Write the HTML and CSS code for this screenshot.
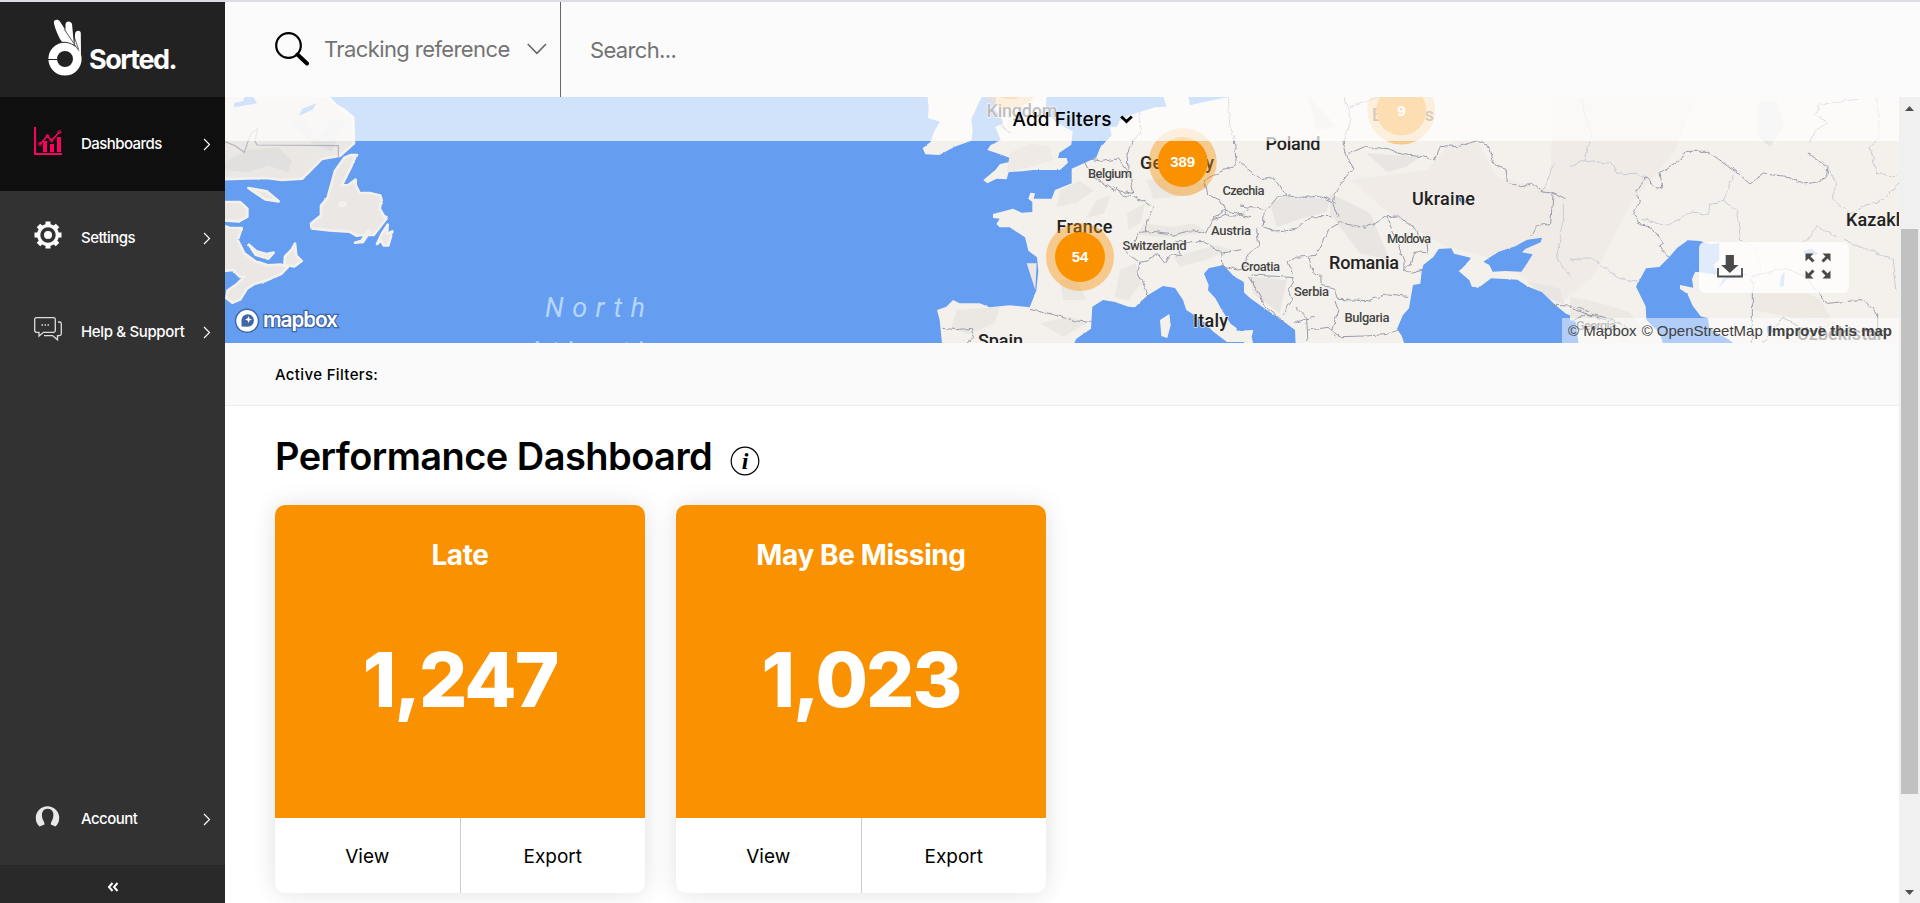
FILE: index.html
```html
<!DOCTYPE html>
<html lang="en">
<head>
<meta charset="utf-8">
<title>Sorted – Performance Dashboard</title>
<link rel="stylesheet" href="styles.css">
</head>
<body>
<div class="app">
  <aside class="sidebar">
    <div class="logo">
      <svg class="logo-mark" width="36" height="60" viewBox="47 18 36 60">
        <circle cx="65" cy="59" r="12.300" fill="none" stroke="#fff" stroke-width="8.600"/>
        <path d="M48 59.500h9" stroke="#222" stroke-width="1"/>
        <path d="M54 23c-1-3 4-4.500 6-1.500l14 22-2 1c-3-2-6-2.500-10-2.500C59 38 55 29 54 23z" fill="#fff"/>
        <path d="M65.500 24.500c0-4 5.500-4 6.500-.5l2 21-1-1-7.500-14z" fill="#fff"/>
        <path d="M75 34c.5-4.500 5.500-4 5.800-1L81 56c-1-4-3-8-6.500-11z" fill="#fff"/>
        <path d="M61 42.300c6-.5 10 .8 14 4" fill="none" stroke="#222" stroke-width=".8"/>
        <path d="M64 29l15 22M73.500 35l5 14" stroke="#222" stroke-width=".7"/>
      </svg>
      <span class="logo-text">Sorted.</span>
    </div>
    <nav class="nav">
      <a class="nav-item active">
        <svg class="nav-icon" width="28" height="28" viewBox="0 0 28 28" fill="none" stroke="#f9035e">
          <path d="M1 0v27h27" stroke-width="2.200"/>
          <path d="M6 17l7.500-8 4 4.500L25.500 5" stroke-width="1.600"/>
          <circle cx="6" cy="17" r="1.500"/><circle cx="13.500" cy="9" r="1.500"/><circle cx="17.500" cy="13.500" r="1.500"/><circle cx="25.500" cy="5" r="1.500"/>
          <path d="M11 25V14M18 25v-8M25 25V10" stroke-width="4"/>
        </svg>
        <span class="nav-label">Dashboards</span>
        <svg class="chev" width="8" height="13" viewBox="0 0 8 13"><path d="M1 1l5.500 5.500L1 12"/></svg>
      </a>
      <a class="nav-item">
        <svg class="nav-icon" width="28" height="28" viewBox="-14 -14 28 28" fill="none" stroke="#fff">
          <circle r="9.300" stroke-width="3.200"/>
          <circle r="4" fill="#fff" stroke="none"/>
          <g stroke-width="5"><path d="M0-13.500V-9M0 9v4.500M-13.500 0H-9M9 0h4.500"/><path transform="rotate(45)" d="M0-13.500V-9M0 9v4.500M-13.500 0H-9M9 0h4.500"/></g>
        </svg>
        <span class="nav-label">Settings</span>
        <svg class="chev" width="8" height="13" viewBox="0 0 8 13"><path d="M1 1l5.500 5.500L1 12"/></svg>
      </a>
      <a class="nav-item">
        <svg class="nav-icon" width="28" height="28" viewBox="0 0 28 28" fill="none" stroke="#ddd" stroke-width="1.300">
          <path d="M2.500 2.700h17q1.800 0 1.800 1.800v11q0 1.800-1.800 1.800H9.500L5 21v-3.700H2.500q-1.800 0-1.800-1.800v-11q0-1.800 1.800-1.800z"/>
          <path d="M24 7h1.500q1.800 0 1.800 1.800v10q0 1.800-1.800 1.800h-2v4.200l-5-4.200H10"/>
          <path d="M7.500 10h1.500M10.500 10H12M13.500 10H15" stroke-width="1.500"/>
        </svg>
        <span class="nav-label help">Help &amp; Support</span>
        <svg class="chev" width="8" height="13" viewBox="0 0 8 13"><path d="M1 1l5.500 5.500L1 12"/></svg>
      </a>
      <a class="nav-item account">
        <svg class="nav-icon" width="28" height="28" viewBox="0 0 28 28">
          <path d="M5.500 24.500A11.700 11.700 0 1 1 21.500 24.500L16.800 22.500c0-2 .5-2.500 1.500-4.500 1.200-3 1.500-6 .5-8-1.600-4.300-8.700-4.300-10.300 0-1 2-.7 5 .5 8 1 2 1.500 2.500 1.500 4.500z" fill="#e8e8e8"/>
        </svg>
        <span class="nav-label">Account</span>
        <svg class="chev" width="8" height="13" viewBox="0 0 8 13"><path d="M1 1l5.500 5.500L1 12"/></svg>
      </a>
      <button class="collapse">
        <svg width="12" height="10" viewBox="0 0 12 10" fill="none" stroke="#fff" stroke-width="2"><path d="M5.500 1L2 5l3.500 4M10.500 1L7 5l3.500 4"/></svg>
      </button>
    </nav>
  </aside>

  <div class="main">
    <header class="topbar">
      <div class="search-type">
        <svg width="34" height="34" viewBox="0 0 34 34" fill="none" stroke="#000"><circle cx="13.500" cy="13.500" r="12.300" stroke-width="2.200"/><path d="M22.500 22.500l9.500 9" stroke-width="4" stroke-linecap="round"/></svg>
        <span class="search-type-label">Tracking reference</span>
        <svg width="20" height="12" viewBox="0 0 20 12" fill="none" stroke="#666" stroke-width="1.600"><path d="M.7 1l9.200 9.300L19 1"/></svg>
      </div>
      <span class="search-placeholder">Search...</span>
    </header>

    <div class="body">
      <div class="content">
        <section class="map">
          <svg class="map-canvas" width="1674" height="246" viewBox="225 97 1674 246">
            <defs>
              <filter id="rough" x="-5%" y="-5%" width="110%" height="110%">
                <feTurbulence type="fractalNoise" baseFrequency="0.14" numOctaves="2" seed="4"/>
                <feDisplacementMap in="SourceGraphic" scale="5" xChannelSelector="R" yChannelSelector="G"/>
              </filter>
            </defs>
            <rect x="225" y="97" width="1674" height="246" fill="#659df0"/>
            <!-- Eastern Canada -->
            <g filter="url(#rough)" transform="translate(225 90) scale(.33333)" fill="#ebe7e4" stroke="#f4f1ec" stroke-width="8" stroke-linejoin="round">
              <path d="M-20 10H300L332 45 360 62 384 82 387 160 345 197 290 207 232 266 170 270 125 264-20 268z"/>
              <path d="M70 294l55 10 36 30-40-6z"/>
              <path d="M-20 336H45l22 20v24l-25 14-62-4z"/>
              <path d="M-20 402L15 414l35 0-12 36 20 40 30 22 40 14 40-2 20 8-20 20-50 22-30 8-22 14-20 32-24 10-18-14 4-22 28-20 22-22-14 0-20-20-44 4z"/>
              <path d="M72 464l22 20 30 8 22-4-16 18-38-12z"/>
              <path d="M178 525l2-26 20-20 10-18 4 36 16 16-22 16z"/>
              <path d="M260 415l-2-14 30-24 0-30 20-24 22-80 28-40 20-8 18 0-8 12-10 24-28 56 20-2 22-16 0 16 12 24 30 0 32 8 4 14-6 24 12 22 10 6-20 26-20 26-32 0-20 2-20-12-60-4z"/>
              <path d="M390 458l20-6 18-30 8 0-22 34zM456 462l14-30 18-28-2 28 16-8-12 42-14 0-8-14z"/>
            </g>
            <g transform="translate(225 90) scale(.33333)">
              <path d="M0 215l70-35 90-8 40 40-10 35-60-20-60 20-70-6zM190 95l50-5 30 60 50-60 40 0-40 95-60-25z" fill="#e2e0df"/>
              <path d="M27 38l28-4 5-18 22 0 14 24-34 6-34 6zM222 78l10-22 42-16-10 18z" fill="#659df0"/>
              <path d="M0 155l30 12 28 20 10-30 12-28 18-14-8 38 6 12 244 2v36" fill="none" stroke="#b4b2c0" stroke-width="3.500"/>
              <ellipse cx="352" cy="343" rx="13" ry="9" fill="#f4f1ec"/>
            </g>
            <!-- Western Europe -->
            <g filter="url(#rough)" transform="translate(900 90) scale(.33333)">
              <path d="M80 0L86 50l-2 34 36 11-18 30-10 30-24 20 8 18 42 2 46-25 50-18 4-28-4-36 22-48 10-20 0-20z" fill="#f4f1ec"/>
              <path d="M290 0l-4 60 16 20 8 20-24 10 16 40-30 15-10 15 36 12 32 12 16-4-6 14-40 8-14 18-36 30 12 10 28-14 30 2 6-22 42-2 30-4 82 0 24-22-4-14-26 0 4-16 36-24 4-40-46-24-36-40 6-60z" fill="#f4f1ec"/>
              <path d="M330 190l60-30 60 10 10 40-80 24-60 14z" fill="#efeae6"/>
              <path d="M785 0l14 50-34 2-46 14-32 10-28 16-8 18-22 2 6 24-34 36-12 30-16 8-58 26 0 44-50 20-10 26-54 0 4-16-14-2-6 18 12 10 0 30-32 2-26-12-60 16 0 12 20 2-10 16 10 10 30 0 46 30 10 40 26 20 4 40-6 60-20 50-60-6-60 6-30-12-60 0-20-10-20 20-28 10 8 30 10 100 380 0 20-44 44-30 4-66 32-20 36 6 40 14 20 2 38-36 46-28 36 6 24 36 10 30 46 30 36 36 40 30 160 0V0z" fill="#f4f1ec"/>
              <path d="M780 690l28-18 4 34-10 38-18-6z" fill="#f4f1ec"/>
              <path d="M970 525l-44 10-14 16 14 34-2 16 22 24 20 36 26 40 30 22 60 0V640l-54-66-25-14z" fill="#659df0"/>
              <path d="M862 0l8 46 42-10 58-12 60-8V0z" fill="#659df0"/>
            </g>
            <g transform="translate(900 90) scale(.33333)" fill="#ebe8e4">
              <path d="M480 300l60-28 40 30-50 36-60 14zM590 330l42-14-20 55-55 14zM680 370l55-30-14 60-36 20zM480 570l50 0 30 60-70 0zM660 540l48-20 16 60-40 52-40-10zM170 660l130-10-16 50-80 34-50-20zM420 700l90-20 50 20-70 40zM380 520l30 0-4 80zM740 270l110-14 80 34-60 26-110 10zM730 400l90 10 60-10 44 28-120 14-90-6zM820 500l130-34 40 14-70 30-80 20z"/>
            </g>
            <!-- Eastern Europe and the Black Sea -->
            <g filter="url(#rough)" transform="translate(1240 90) scale(.33333)">
              <path d="M12 0H2080V800H12z" fill="#f4f1ec"/>
              <path d="M330 270L560 240 640 150 710 150 770 260 930 300 940 0H1380L1300 190 1180 330 1060 560 960 640 830 550 740 500 620 470 460 380z" fill="#f0ebe7"/>
              <path d="M270 310l120 60 60 140-90-20-90-120zM90 340l50-24 130 10-10 40-80 20-70 26zM380 190l160 10-40 30-60 16zM30 560l110 10-20 100-80-60zM200 10l90 100-60 10zM860 575l100 20 14 50-50-20z" fill="#e8e5e2"/>
              <path d="M-10 590l10 6 30 28 30 22 65 44 40 30 4 90H50l-15-70 5-20-50 2z" fill="#659df0"/>
              <path d="M545 545l5-20 30-24 16-24 38-2 8 16 50 12-6 20-30 20 32 28 8 20 26-2 32-24 78 4 30 20 44 18 40 38 32 26 30 12 10 110H780l-15-34-50 0-50 12-50 26H505l-20-60-14-20 18-42 18-20 12-70 22-4z" fill="#659df0"/>
              <path d="M730 515l46-30 50-16 36-20 44-6-4 14-46 20-10 10 32 6-16 26-18 26-50-2-36 2-10-20z" fill="#659df0"/>
              <path d="M660 542l36-40 30 8 16 20 14 24-24 16-18 24-16-6-6-24z" fill="#f4f1ec"/>
              <path d="M644 320l26 4 14 16-20-2z" fill="#3b7fe8"/>
            </g>
            <!-- Caspian Sea -->
            <g filter="url(#rough)" transform="translate(1570 90) scale(.33333)">
              <path d="M198 590l30-55 40-4 30-30 24-28 32-22 36 2 30 10 28-4 0 50-18 16 16 30-40-6-30-4-10 22 4 26-40-8 0 12 22 14 16 36 24 32 22 6 4 32 56 30 44 32-40 0H285l-16-50-40-40-2-40z" fill="#659df0"/>
              <path d="M445 596l14-28 30-14 50-2-70 16zM632 560l12-16-2 42-12 6zM696 484l30-8 20 16-30 6zM590 710l14-6 4 20-14 16z" fill="#659df0"/>
              <path d="M550 610l150-10 50 30 60 100-110-40-150-30z" fill="#efe9e3"/>
              <path d="M0 20l190 20 60 100-140 30L0 150z" fill="#f0ebe7"/>
              <path d="M0 620l80 16 100 30 40 60-60 20L0 690z" fill="#ebe9e2"/>
              <path d="M560 40l60-10 20 80-40 60-36-30z" fill="#e4e5e4"/>
            </g>
            <!-- Country borders -->
            <g filter="url(#rough)" fill="none" stroke="#9493a6" stroke-width="2.800">
              <g transform="translate(900 90) scale(.33333)">
                <path d="M575 208l30 6 50-8 30 40 10 34 6 30-60-10-40-26-36-30-12-30M685 250l-4-60 20-40 20-20 0-60M640 290l30 26 30 4 64 30-20 40-6 36M740 425l-24 2-20 40-20 16 14 14 30 20 20-4 32-22 22 28 20-28 28 6-10-30 30-6M740 425l80 10 60-16 40 10 20-40 40-14M720 510l-6 40 20 40 14 34-24 10M390 655l60 16 40 12 40 10 44 4M128 715l40 4 46-4 10 30-20 14M985 20l4 80 14 50 6 76-50 20-46 26 10 40 40 20 20 46 20 0 50-20M935 390l40-30 75 20M830 455l80 0 60 34 54-10M965 485l4 40 36 14 46-10M290 100l50 30"/>
              </g>
              <g transform="translate(1240 90) scale(.33333)">
                <path d="M315 20l18 80-24 56 12 40 18 42-50 60-10 44 16 42M0 215l20 20 46 34 34-6 38 52-24 4-42 52-2 40 40 12 60-8 40-34 62-2M140 318l60 4 44-4 46 22M328 190l46-20 70 6 44 18 60 6 36 10 14-44 54 4 60-18 36 16 14 56 36 12 4 40 40 14 36-10 28 26 40 4 30 16M0 348l70 10M50 415l6 50-30 30-10 20M298 398l-30 20-40 78-60 6-24 16 12 30 4 30-16 20 14 30-28 44M298 398l76 14 32-12 32-20 40-2 28 24 26 20 4 30M438 380l30 70 24 60 0 30 20 10 38-10M560 450l4 38-40-2-12 40-20 10M205 502l14 40 24 20 0 24 40 8 12 34 90 4 60-20 66 8M285 630l10 30-20 60 30 20 70-2 60-4 44-14M25 560l60 100 50 40M30 555l80 4 50 4M165 650l36 36 26-6M160 700l40-14 4 70M205 720l60-8 24 30M940 306l-8 94-40 8-20 30M330 50l44-14 60-20M935 645l60 4 55 16"/>
              </g>
              <g transform="translate(1570 90) scale(.33333)">
                <path d="M0 655l60 20 40 12 50 10M0 700l50-30 76 16 60 40M298 498l-30-26 12-10-30-46-36-8-24-34 18-40-8-34 28-40 30 38 20-8-8-42 62-40 14-24 66 0 46 32 38 26 44 40 40-30 60 6 66 24 34-6 30-16 4-30-60-40M720 155l20-40 36-16-40-26 10-30 76-10 44-6M547 760V562l92-28 62 20 70 86 60-6 52-2 40 40 0 80M580 758l60-74 40 20 60 50"/>
              </g>
            </g>
            <g filter="url(#rough)" fill="none" stroke="#c8c8d3" stroke-width="2.800">
              <path transform="translate(1570 90) scale(.33333)" d="M-50 220l-20 60-20 28M30 20l20 70 14 40-22 80-42 20M42 210l80 10 20 32 56-2 22 14M214 388l86 18 64-40 52 8 4-34 40-8 30-80M460 330l40 30 12 90 50 30 10 80M760 210l40 70-14 44 50 46 40-20 60-20 60-60M920 20l10 120-30 30 20 80 60 10M820 450l80 30 70 30 10 90M0 510l60-8 60 44 30 20 60 8M700 460l40-50 60 30M0 560l-40-60 20-100 0-60"/>
            </g>
            <!-- Place names -->
            <g class="place big">
              <text x="986.500" y="117" textLength="71">Kingdom</text>
              <text x="1140" y="169" textLength="74">Germany</text>
              <text x="1265.500" y="149.500" textLength="55">Poland</text>
              <text x="1056.500" y="233" textLength="56">France</text>
              <text x="1412" y="204.500" textLength="63">Ukraine</text>
              <text x="1329" y="269" textLength="70">Romania</text>
              <text x="1193" y="327" textLength="35">Italy</text>
              <text x="978" y="347" textLength="45">Spain</text>
              <text x="1372" y="121" textLength="62">Belarus</text>
              <text x="1846" y="226" textLength="95">Kazakhstan</text>
              <text x="1797" y="340" textLength="90" class="muted">Uzbekistan</text>
            </g>
            <g class="place small">
              <text x="1088" y="177.500" textLength="44">Belgium</text>
              <text x="1222.500" y="194.500" textLength="42">Czechia</text>
              <text x="1211" y="235" textLength="40">Austria</text>
              <text x="1122.500" y="250" textLength="64">Switzerland</text>
              <text x="1241" y="270.500" textLength="39">Croatia</text>
              <text x="1387" y="243" textLength="44">Moldova</text>
              <text x="1294" y="296" textLength="35">Serbia</text>
              <text x="1344.500" y="321.500" textLength="45">Bulgaria</text>
              <text x="1576" y="330" textLength="40" class="muted">Georgia</text>
            </g>
            <g class="ocean">
              <text x="545" y="317" textLength="100">North</text>
              <text x="527" y="361" textLength="136">Atlantic</text>
            </g>
            <!-- Clusters -->
            <g class="cluster">
              <g fill="#f99100" fill-opacity=".4"><circle cx="1010" cy="74" r="34"/><circle cx="1182.700" cy="162" r="34"/><circle cx="1080" cy="257" r="34"/><circle cx="1401.300" cy="110.500" r="34"/></g>
              <g fill="#f99100"><circle cx="1010" cy="74" r="25"/><circle cx="1182.700" cy="162" r="25"/><circle cx="1080" cy="257" r="25"/><circle cx="1401.300" cy="110.500" r="25"/></g>
              <text x="1182.700" y="167">389</text>
              <text x="1080" y="262">54</text>
            </g>
            <rect x="225" y="97" width="1674" height="44" fill="#fff" fill-opacity=".7"/>
            <g class="cluster"><text x="1401.300" y="115.500">9</text></g>
            <!-- Provider logo -->
            <circle cx="247" cy="320.800" r="11.500" fill="#fff" stroke="#3f66a6" stroke-width="1.500"/>
            <path d="M241.500 326.500v-6a6.200 6.200 0 1 1 6.200 6.200z" fill="#3f66a6"/>
            <path d="M248.500 316l1 2.500 2.500 1-2.500 1-1 2.500-1-2.500-2.500-1 2.500-1z" fill="#fff"/>
            <text class="provider" x="263" y="326.500" textLength="75">mapbox</text>
          </svg>
          <button class="add-filters">
            <span class="add-filters-label">Add Filters</span>
            <svg width="13" height="9" viewBox="0 0 13 9" fill="none" stroke="#000" stroke-width="3"><path d="M1.200 1.500l5.300 5 5.300-5"/></svg>
          </button>
          <div class="map-tools">
            <svg width="26" height="23" viewBox="0 0 26 23" fill="#4a4a4a"><path d="M8.700 0h8.200v10h4.600L12.800 18 4.100 10h4.600z"/><path d="M1 13v8.500h24V13" fill="none" stroke="#4a4a4a" stroke-width="1.800"/></svg>
            <svg width="26" height="26" viewBox="0 0 26 26" fill="#4a4a4a" stroke="#4a4a4a"><g id="arrow"><path d="M.5.500h8l-8 8z" stroke="none"/><path d="M3 3l5.500 5.500" stroke-width="3"/></g><use href="#arrow" transform="translate(26 0) scale(-1 1)"/><use href="#arrow" transform="translate(0 26) scale(1 -1)"/><use href="#arrow" transform="translate(26 26) scale(-1 -1)"/></svg>
          </div>
          <div class="attribution"><span>© Mapbox</span><span>© OpenStreetMap</span><b>Improve this map</b></div>
        </section>

        <section class="active-filters">Active Filters:</section>

        <section class="dashboard">
          <div class="heading">
            <h1>Performance Dashboard</h1>
            <svg class="info" width="30" height="30" viewBox="0 0 30 30"><circle cx="15" cy="15" r="13.800" fill="none" stroke="#000" stroke-width="1.200"/><text x="15" y="23">i</text></svg>
          </div>
          <div class="cards">
            <article class="card">
              <div class="card-top"><h2>Late</h2><strong>1,247</strong></div>
              <div class="card-actions"><a>View</a><a>Export</a></div>
            </article>
            <article class="card">
              <div class="card-top"><h2>May Be Missing</h2><strong>1,023</strong></div>
              <div class="card-actions"><a>View</a><a>Export</a></div>
            </article>
          </div>
        </section>
      </div>
      <div class="scrollbar">
        <svg width="9" height="5" viewBox="0 0 9 5"><path d="M0 5l4.500-5L9 5z" fill="#505050"/></svg>
        <div class="thumb"></div>
        <svg width="9" height="5" viewBox="0 0 9 5"><path d="M0 0h9L4.500 5z" fill="#505050"/></svg>
      </div>
    </div>
  </div>
</div>
</body>
</html>
```
FILE: styles.css
```css
* { box-sizing: border-box; }
body {
  margin: 0;
  font-family: Inter, "Liberation Sans", sans-serif;
  color: #000;
  background: #fff;
}
h1, h2 { margin: 0; }
svg { display: block; flex: none; }
button { border: 0; padding: 0; font: inherit; }

.app {
  display: flex;
  height: 903px;
  border-top: 2px solid #dcdce3;
  overflow: hidden;
}

.sidebar {
  width: 225px;
  flex: none;
  display: flex;
  flex-direction: column;
  background: #323232;
  color: #fff;
}
.logo {
  height: 95px;
  background: #222;
  display: flex;
  align-items: flex-start;
  padding: 16px 0 0 47px;
}
.logo-text {
  margin: 25px 0 0 6px;
  font-size: 27px;
  line-height: 34px;
  font-weight: 700;
  letter-spacing: -1.5px;
}
.nav { flex: 1; display: flex; flex-direction: column; }
.nav-item {
  height: 94px;
  display: flex;
  align-items: center;
  padding: 0 14px 0 34px;
}
.nav-item.active { background: #0f0f0f; }
.nav-icon { margin: -6px 19px 0 0; }
.nav-label {
  flex: 1;
  margin-top: -2px;
  white-space: nowrap;
  font-size: 15px;
  font-weight: 500;
  letter-spacing: -.55px;
}
.nav-label.help { letter-spacing: -.35px; }
.chev { fill: none; stroke: #fff; stroke-width: 1.2; }
.account { margin-top: auto; padding-top: 2px; }
.collapse {
  height: 38px;
  background: #292929;
  display: flex;
  align-items: center;
  justify-content: center;
  padding-top: 6px;
}

.main { flex: 1; min-width: 0; display: flex; flex-direction: column; }
.topbar {
  height: 95px;
  flex: none;
  display: flex;
  align-items: center;
  background: #fbfbfb;
  color: #737373;
  font-size: 22px;
}
.search-type {
  width: 336px;
  height: 100%;
  display: flex;
  align-items: center;
  padding: 0 0 2px 50px;
  border-right: 1px solid #666;
}
.search-type-label { width: 203px; margin-left: 15px; white-space: nowrap; letter-spacing: -.6px; }
.search-placeholder { margin-left: 29px; letter-spacing: -.65px; }

.body { flex: 1; min-height: 0; display: flex; }
.content { flex: 1; min-width: 0; overflow: hidden; }

.map { position: relative; height: 246px; overflow: hidden; }
.place { font-family: Roboto, "Liberation Sans", sans-serif; font-weight: 500; paint-order: stroke; stroke: #f4f1ec; stroke-opacity: .8; stroke-width: 1.5px; }
.place.big { font-size: 18px; fill: #222; }
.place.small { font-size: 13px; fill: #444; }
.place .muted { fill: #777; }
.ocean { font: italic 27px Roboto, "Liberation Sans", sans-serif; fill: #b5d6fb; }
.cluster text { font: bold 15px "Liberation Sans", sans-serif; fill: #fff; text-anchor: middle; }
.provider { font: 600 21px Inter, sans-serif; fill: #fff; stroke: #3f66a6; stroke-width: 2.5px; paint-order: stroke; }

.add-filters {
  position: absolute;
  inset: 0 0 auto;
  height: 44px;
  padding-left: 21px;
  display: flex;
  align-items: center;
  justify-content: center;
  gap: 8px;
  background: none;
  color: #000;
  font-size: 19px;
  font-weight: 500;
}
.add-filters-label { letter-spacing: .1px; }
.map-tools {
  position: absolute;
  right: 50px;
  top: 145px;
  width: 150px;
  height: 51px;
  padding: 0 18px 3px;
  display: flex;
  align-items: center;
  justify-content: space-between;
  border-radius: 6px;
  background: rgba(255, 255, 255, .8);
}
.attribution {
  position: absolute;
  right: 0;
  bottom: 0;
  width: 337px;
  height: 25px;
  padding: 0 7px 0 6px;
  display: flex;
  align-items: center;
  justify-content: space-between;
  white-space: nowrap;
  background: rgba(255, 255, 255, .5);
  color: #404040;
  font: 15px/25px "Liberation Sans", sans-serif;
}

.active-filters {
  height: 63px;
  padding-left: 50px;
  border-bottom: 1px solid #ededed;
  background: #fafafa;
  font-size: 15px;
  font-weight: 500;
  letter-spacing: .35px;
  line-height: 63px;
}
.dashboard { padding: 26px 50px 0; }
.heading { display: flex; align-items: center; height: 51px; }
.heading h1 { margin-top: -4px; font-size: 38px; font-weight: 600; letter-spacing: -.55px; white-space: nowrap; }
.info { margin: 7px 0 0 18px; }
.info text { font: italic bold 24px "Liberation Serif", serif; text-anchor: middle; }
.cards { display: flex; gap: 31px; margin-top: 22px; }
.card {
  width: 370px;
  height: 388px;
  border-radius: 10px;
  overflow: hidden;
  background: #fff;
  box-shadow: 0 0 25px rgba(0, 0, 0, .12);
}
.card-top {
  height: 313px;
  display: flex;
  flex-direction: column;
  align-items: center;
  background: #f99100;
  color: #fff;
}
.card-top h2 { margin-top: 32px; font-size: 28px; line-height: 36px; font-weight: 700; letter-spacing: -.4px; }
.card-top strong { margin-top: 60px; font-size: 76px; line-height: 92px; font-weight: 800; letter-spacing: -2px; }
.card-actions { height: 75px; display: flex; }
.card-actions a { flex: 1; text-align: center; line-height: 78px; font-size: 19px; }
.card-actions a + a { border-left: 1px solid #ccc; }

.scrollbar {
  width: 21px;
  padding: 9px 2px 8px;
  display: flex;
  flex-direction: column;
  align-items: center;
  background: #f0f0f0;
}
.thumb { width: 17px; height: 565px; margin: 118px 0 auto; background: #c1c1c1; }
```
